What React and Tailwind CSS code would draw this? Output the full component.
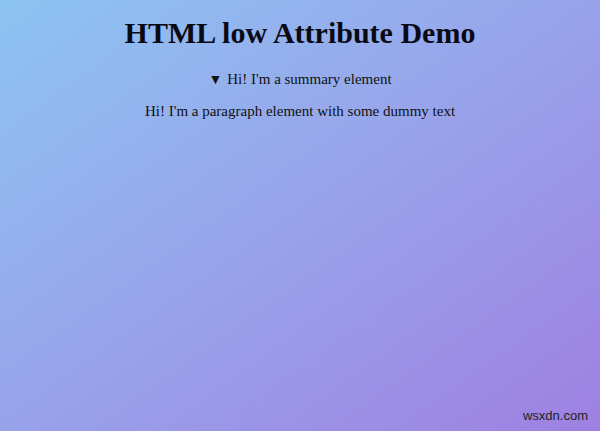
export default function App() {
  return (
    <div className="relative w-[600px] h-[431px] overflow-hidden bg-linear-to-br from-[#8cc4f2] to-[#9e80e2] font-['Liberation_Serif',serif] text-black text-center">
      <h1 className="pt-[17px] text-[30px] leading-[32px] font-bold text-[#0a0a14]">HTML low Attribute Demo</h1>
      <div className="mt-[22px] text-[15px] leading-[17px] text-[#111]">
        <span className="text-[14px] mr-[5px]">▼</span>Hi! I'm a summary element
      </div>
      <p className="mt-[15px] text-[15px] leading-[17px] text-[#111]">Hi! I'm a paragraph element with some dummy text</p>
      <div className="absolute right-[12px] bottom-[6px] font-['Liberation_Sans',sans-serif] text-[13px] text-[#222]">wsxdn.com</div>
    </div>
  );
}
